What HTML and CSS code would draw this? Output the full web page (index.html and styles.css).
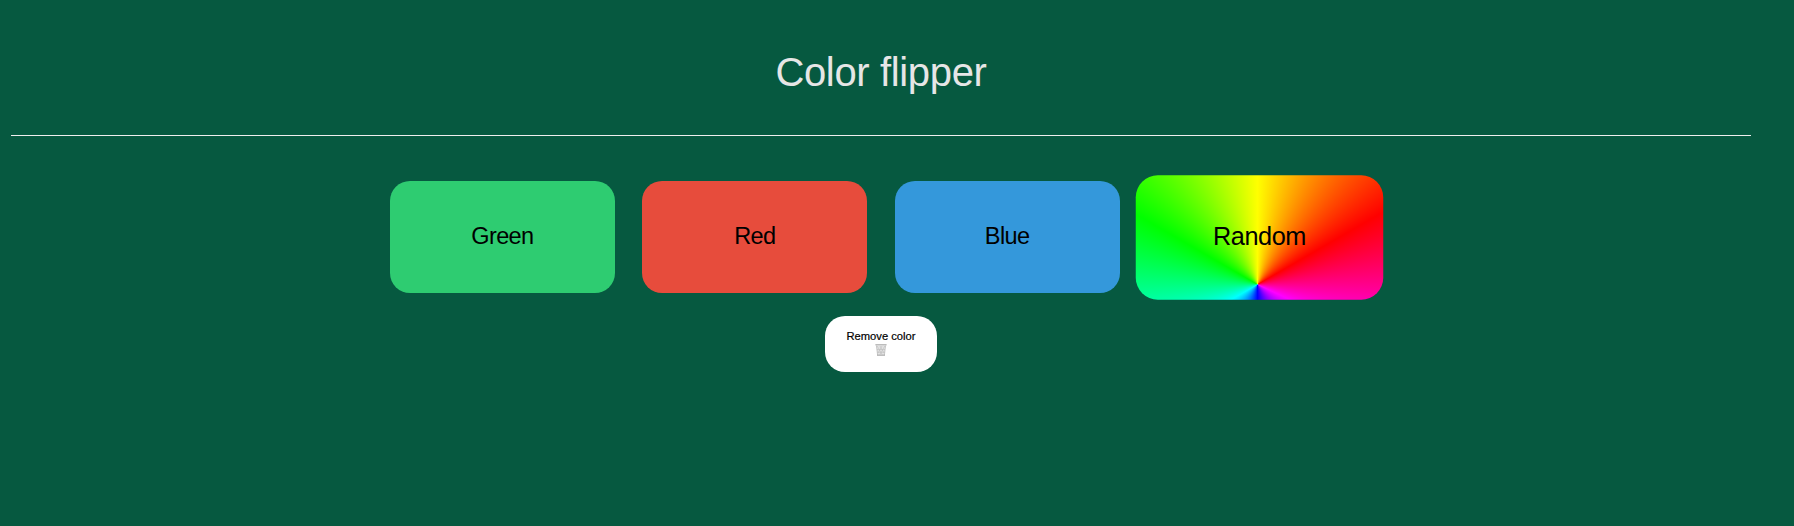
FILE: index.html
```html
<!DOCTYPE html>
<html lang="en">
<head>
<meta charset="utf-8">
<title>Color flipper</title>
<link rel="stylesheet" href="styles.css">
</head>
<body>
<div class="container">
  <header class="header"><h1 class="title">Color flipper</h1></header>
  <main class="content">
    <div class="buttons">
      <button class="button green">Green</button>
      <button class="button red">Red</button>
      <button class="button blue">Blue</button>
      <button class="button random">Random</button>
    </div>
    <button class="remove">
      <span>Remove color</span>
      <svg class="trash" viewBox="0 0 12 12" aria-hidden="true">
        <path d="M1.4 1.5 2.6 11H9.4L10.6 1.5Z" fill="#e2e2e2"/>
        <path d="M2.2 2 7 10.5M5 2 9 9M9.8 2 5 10.5M7 2 3 9M1.9 5.5H10M2.4 8.3H9.6" stroke="#b8b8b8" stroke-width=".5" fill="none"/>
        <path d="M1.4 1.5 2.6 11M10.6 1.5 9.4 11" stroke="#b5b5b5" stroke-width=".7"/>
        <path d="M.4 .8H11.6M2 11.2H10" stroke="#a0a0a0" stroke-width="1"/>
      </svg>
    </button>
  </main>
</div>
</body>
</html>
```
FILE: styles.css
```css
body {
  margin: 0;
  background: #065940;
  font-family: "Liberation Sans", Arial, sans-serif;
}
.container {
  width: 1740px;
  margin-left: 11px;
}
.header {
  box-sizing: border-box;
  height: 136px;
  padding-top: 50px;
  border-bottom: 1px solid #eee;
  text-align: center;
}
.title {
  margin: 0;
  color: #e6e6e6;
  font-size: 40px;
  font-weight: 400;
  letter-spacing: -0.35px;
  line-height: 45px;
}
.content {
  display: flex;
  flex-direction: column;
  align-items: center;
  padding-top: 45px;
}
.buttons {
  display: flex;
  align-items: flex-start;
  gap: 27.4px;
}
.button {
  width: 225px;
  height: 112px;
  padding: 0 0 2px;
  border: 0;
  border-radius: 20px;
  color: #000;
  font: 23.5px "Liberation Sans", Arial, sans-serif;
  letter-spacing: -0.6px;
}
.green { background: #2ecc71; }
.red { background: #e74c3c; }
.blue { background: #3498db; }
.random {
  height: 113px;
  background: conic-gradient(at 49.2% 87.8%, yellow, red 60deg, magenta 115deg, blue 180deg, aqua 240deg, lime 300deg, yellow);
  font-size: 23px;
  letter-spacing: -0.4px;
  transform: scale(1.1);
}
.remove {
  display: flex;
  flex-direction: column;
  align-items: center;
  width: 112px;
  height: 56px;
  margin-top: 22px;
  padding: 14px 0 0;
  border: 0;
  border-radius: 20px;
  background: #fff;
  color: #000;
  font: 11.2px/13px "Liberation Sans", Arial, sans-serif;
  -webkit-text-stroke: 0.2px #000;
}
.trash {
  width: 12px;
  height: 12px;
  margin-top: 1px;
}
```
